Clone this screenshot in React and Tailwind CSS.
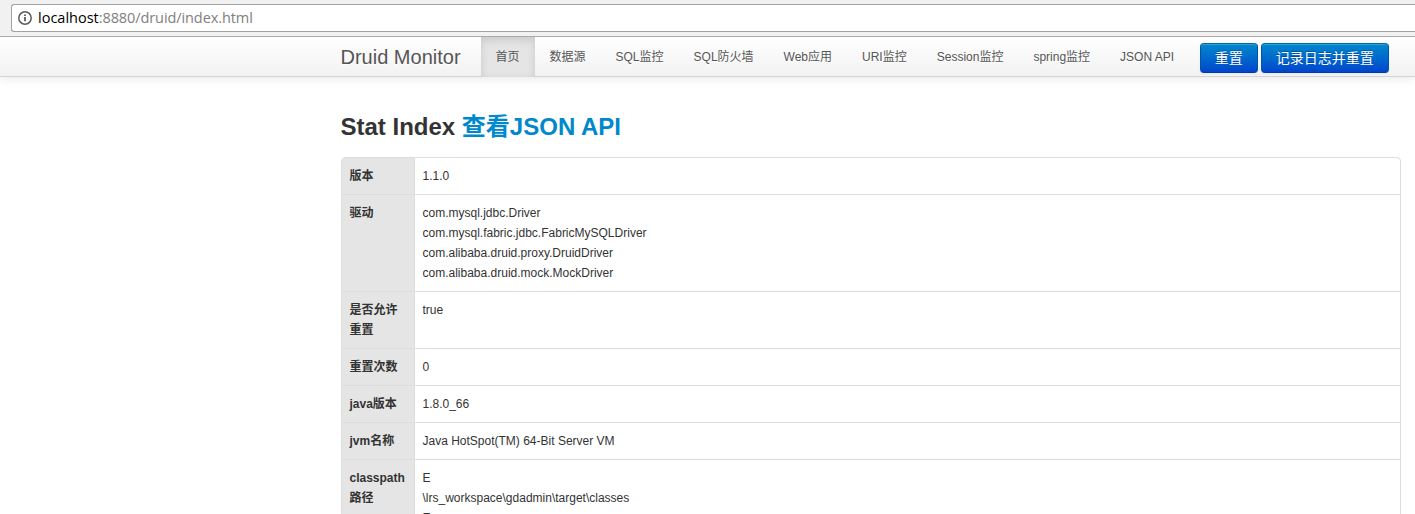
const navItems = ["首页", "数据源", "SQL监控", "SQL防火墙", "Web应用", "URI监控", "Session监控", "spring监控", "JSON API"];

const rows = [
  { label: ["版本"], value: ["1.1.0"] },
  {
    label: ["驱动"],
    value: [
      "com.mysql.jdbc.Driver",
      "com.mysql.fabric.jdbc.FabricMySQLDriver",
      "com.alibaba.druid.proxy.DruidDriver",
      "com.alibaba.druid.mock.MockDriver",
    ],
  },
  { label: ["是否允许", "重置"], value: ["true"] },
  { label: ["重置次数"], value: ["0"] },
  { label: ["java版本"], value: ["1.8.0_66"] },
  { label: ["jvm名称"], value: ["Java HotSpot(TM) 64-Bit Server VM"] },
  { label: ["classpath", "路径"], value: ["E", "\\lrs_workspace\\gdadmin\\target\\classes", "E"] },
];

function AddressBar() {
  return (
    <div className="relative z-10 h-[37px] shrink-0 border-b border-[#a9aaa9] bg-[#f1f1f1] pt-1 pl-[11px]">
      <div className="flex h-7 items-center rounded-l-[3px] border border-r-0 border-[#a3a3a3] bg-white pl-[6px]">
        <svg className="size-[14px] shrink-0" viewBox="0 0 14 14" fill="none">
          <circle cx="7" cy="7" r="6.2" stroke="#5a5a5a" strokeWidth="1.5" />
          <path d="M7 6v4.3M7 3.4v1.7" stroke="#5a5a5a" strokeWidth="1.8" />
        </svg>
        <span className="ml-[6px] font-['Open_Sans','Noto_Sans',sans-serif] text-[14.5px] leading-none tracking-[-0.09px] whitespace-nowrap text-[#808080]">
          <span className="tracking-normal text-black">localhost</span>:8880/druid/index.html
        </span>
      </div>
    </div>
  );
}

function ResetButton({ children }) {
  return (
    <button className="h-[30px] rounded-[4px] border border-[#0055a8] border-t-[#0067b5] border-b-[#003ca8] bg-linear-to-b from-[#0088cc] to-[#0044cc] px-[14px] text-sm leading-5 whitespace-nowrap text-white shadow-[inset_0_1px_0_rgba(255,255,255,0.2),0_1px_2px_rgba(0,0,0,0.05)] [text-shadow:0_-1px_0_rgba(0,0,0,0.25)]">
      {children}
    </button>
  );
}

function Navbar() {
  return (
    <header className="relative flex h-10 shrink-0 border-b border-[#d4d4d4] bg-linear-to-b from-white to-[#f2f2f2] pl-[340.5px] shadow-[0_1px_10px_rgba(0,0,0,0.1)]">
      <a className="w-[140px] shrink-0 pt-[10px] text-xl leading-5 whitespace-nowrap text-[#555] [text-shadow:0_1px_0_#fff]">Druid Monitor</a>
      <nav className="flex">
        {navItems.map((item, i) => (
          <a
            key={item}
            className={
              i === 0
                ? "h-10 bg-[#e5e5e5] px-[15px] pt-[10px] leading-5 whitespace-nowrap text-[#555] shadow-[inset_0_3px_8px_rgba(0,0,0,0.125)]"
                : "px-[15px] pt-[10px] leading-5 whitespace-nowrap text-[#555] [text-shadow:0_1px_0_#fff]"
            }
          >
            {item}
          </a>
        ))}
      </nav>
      <div className="ml-[10.6px] flex gap-[3px] pt-[6px]">
        <ResetButton>重置</ResetButton>
        <ResetButton>记录日志并重置</ResetButton>
      </div>
    </header>
  );
}

export default function App() {
  return (
    <div className="flex h-[514px] flex-col overflow-hidden bg-white font-['Liberation_Sans','Noto_Sans_CJK_SC',sans-serif] text-xs text-[#333]">
      <AddressBar />
      <Navbar />
      <main className="w-[1400.5px] pt-[30px] pl-[340.5px]">
        <h3 className="text-2xl leading-10 font-bold whitespace-nowrap">
          Stat Index <a className="text-[#0088cc]">查看JSON API</a>
        </h3>
        <div className="mt-[10px] overflow-hidden rounded-[4px] border border-[#ddd]">
          {rows.map((row, i) => (
            <div key={row.label[0]} className={i === 0 ? "flex" : "flex border-t border-[#ddd]"}>
              <div className="w-[73px] shrink-0 border-r border-[#ddd] bg-[#e5e5e5] p-2 font-bold whitespace-nowrap">
                {row.label.map((line) => (
                  <div key={line} className="h-5 leading-5">{line}</div>
                ))}
              </div>
              <div className="p-2">
                {row.value.map((line, n) => (
                  <div key={n} className="h-5 leading-5">{line}</div>
                ))}
              </div>
            </div>
          ))}
        </div>
      </main>
    </div>
  );
}
